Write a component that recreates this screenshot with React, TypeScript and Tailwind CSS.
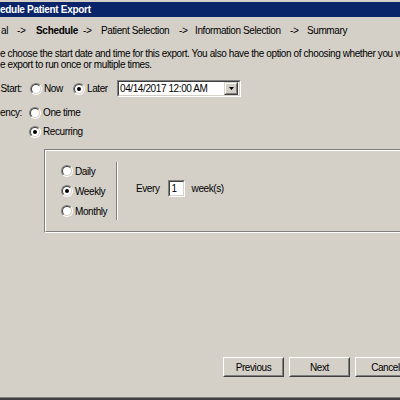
import React from 'react';

function Radio({ checked }: { checked?: boolean }) {
  return (
    <span className="inline-flex h-[12px] w-[12px] shrink-0 rounded-full border border-t-[#808080] border-l-[#808080] border-r-white border-b-white">
      <span className="flex h-full w-full items-center justify-center rounded-full border border-t-[#404040] border-l-[#404040] border-r-[#d4d0c8] border-b-[#d4d0c8] bg-white">
        {checked && <span className="h-[4px] w-[4px] rounded-full bg-black" />}
      </span>
    </span>
  );
}

function Sunken({ className, children }: { className?: string; children?: React.ReactNode }) {
  return (
    <div className={`border border-t-[#808080] border-l-[#808080] border-r-white border-b-white ${className ?? ''}`}>
      <div className="flex h-full w-full items-center border border-t-[#404040] border-l-[#404040] border-r-[#d4d0c8] border-b-[#d4d0c8] bg-white">
        {children}
      </div>
    </div>
  );
}

function Button({ label }: { label: string }) {
  return (
    <div className="h-[20px] w-[61px] shrink-0 border border-t-white border-l-white border-r-[#404040] border-b-[#404040]">
      <div className="flex h-full w-full items-center justify-center border border-t-[#d4d0c8] border-l-[#d4d0c8] border-r-[#808080] border-b-[#808080]">
        {label}
      </div>
    </div>
  );
}

export default function App() {
  return (
    <div
      className="flex h-[400px] w-[400px] flex-col overflow-hidden bg-[#d4d0c8] text-[10px] tracking-[-0.4px] text-black"
      style={{ fontFamily: '"Liberation Sans", Arial, sans-serif' }}
    >
      <div className="h-[2px] shrink-0" />
      <div className="h-[15px] shrink-0 bg-[#0a246a] text-[10px] font-bold leading-[15px] tracking-[-0.3px] text-white">
        edule Patient Export
      </div>

      <div className="mt-[8px] flex h-[12px] shrink-0 whitespace-nowrap leading-[12px]">
        <span className="w-[17px] shrink-0 pl-px">al</span>
        <span className="w-[19px] shrink-0">-&gt;</span>
        <span className="w-[47px] shrink-0 font-bold tracking-[-0.3px]">Schedule</span>
        <span className="w-[18px] shrink-0">-&gt;</span>
        <span className="w-[78px] shrink-0">Patient Selection</span>
        <span className="w-[16px] shrink-0">-&gt;</span>
        <span className="w-[95px] shrink-0">Information Selection</span>
        <span className="w-[17px] shrink-0">-&gt;</span>
        <span className="shrink-0">Summary</span>
      </div>

      <div className="mt-[11px] h-[22px] shrink-0 whitespace-nowrap leading-[11px]">
        e choose the start date and time for this export. You also have the option of choosing whether you w
        <br />
        e export to run once or multiple times.
      </div>

      <div className="mt-[10px] flex h-[17px] shrink-0 items-center whitespace-nowrap">
        <span className="w-[22px] shrink-0 text-right">Start:</span>
        <div className="ml-[8px] flex w-[43px] shrink-0 items-center gap-[2px]">
          <Radio />
          <span>Now</span>
        </div>
        <div className="flex w-[44px] shrink-0 items-center gap-[2px]">
          <Radio checked />
          <span>Later</span>
        </div>
        <Sunken className="h-[17px] w-[124px] shrink-0">
          <span className="flex-1 pl-px">04/14/2017 12:00 AM</span>
          <div className="mr-px h-[13px] w-[14px] border border-t-[#d4d0c8] border-l-[#d4d0c8] border-r-[#404040] border-b-[#404040]">
            <div className="flex h-full w-full items-center justify-center border border-t-white border-l-white border-r-[#808080] border-b-[#808080] bg-[#d4d0c8]">
              <svg width="5" height="3" viewBox="0 0 5 3">
                <path d="M0 0h5L2.5 3z" fill="#000" />
              </svg>
            </div>
          </div>
        </Sunken>
      </div>

      <div className="mt-[7px] flex h-[17px] shrink-0 items-center whitespace-nowrap">
        <span className="w-[22px] shrink-0 text-right">ency:</span>
        <div className="ml-[7px] flex items-center gap-[2px]">
          <Radio />
          <span>One time</span>
        </div>
      </div>

      <div className="mt-[2px] flex h-[17px] shrink-0 items-center whitespace-nowrap">
        <div className="ml-[29px] flex items-center gap-[2px]">
          <Radio checked />
          <span>Recurring</span>
        </div>
      </div>

      <div className="ml-[44px] mt-[9px] h-[84px] w-[400px] shrink-0 border-t border-l border-b border-t-[#808080] border-l-[#808080] border-b-white">
        <div className="flex h-full w-full border-t border-l border-b border-t-white border-l-white border-b-[#808080] whitespace-nowrap">
          <div className="flex w-[70px] shrink-0 flex-col pl-[15px] pt-[10px]">
            <div className="flex h-[20px] items-center gap-[2px]">
              <Radio />
              <span>Daily</span>
            </div>
            <div className="flex h-[20px] items-center gap-[2px]">
              <Radio checked />
              <span>Weekly</span>
            </div>
            <div className="flex h-[20px] items-center gap-[2px]">
              <Radio />
              <span>Monthly</span>
            </div>
          </div>
          <div className="mt-[11px] h-[58px] w-[2px] shrink-0 border-l border-r border-l-[#808080] border-r-white" />
          <div className="ml-[18px] mt-[29px] flex h-[17px] items-center">
            <span>Every</span>
            <Sunken className="ml-[8px] h-[17px] w-[17px]">
              <span className="pl-[2px]">1</span>
            </Sunken>
            <span className="ml-[7px]">week(s)</span>
          </div>
        </div>
      </div>

      <div className="ml-[223px] mt-[124px] flex shrink-0 gap-[5px] whitespace-nowrap">
        <Button label="Previous" />
        <Button label="Next" />
        <Button label="Cancel" />
      </div>

      <div className="mt-auto h-px shrink-0 bg-[#808080]" />
      <div className="h-[2px] shrink-0 bg-[#404040]" />
    </div>
  );
}
